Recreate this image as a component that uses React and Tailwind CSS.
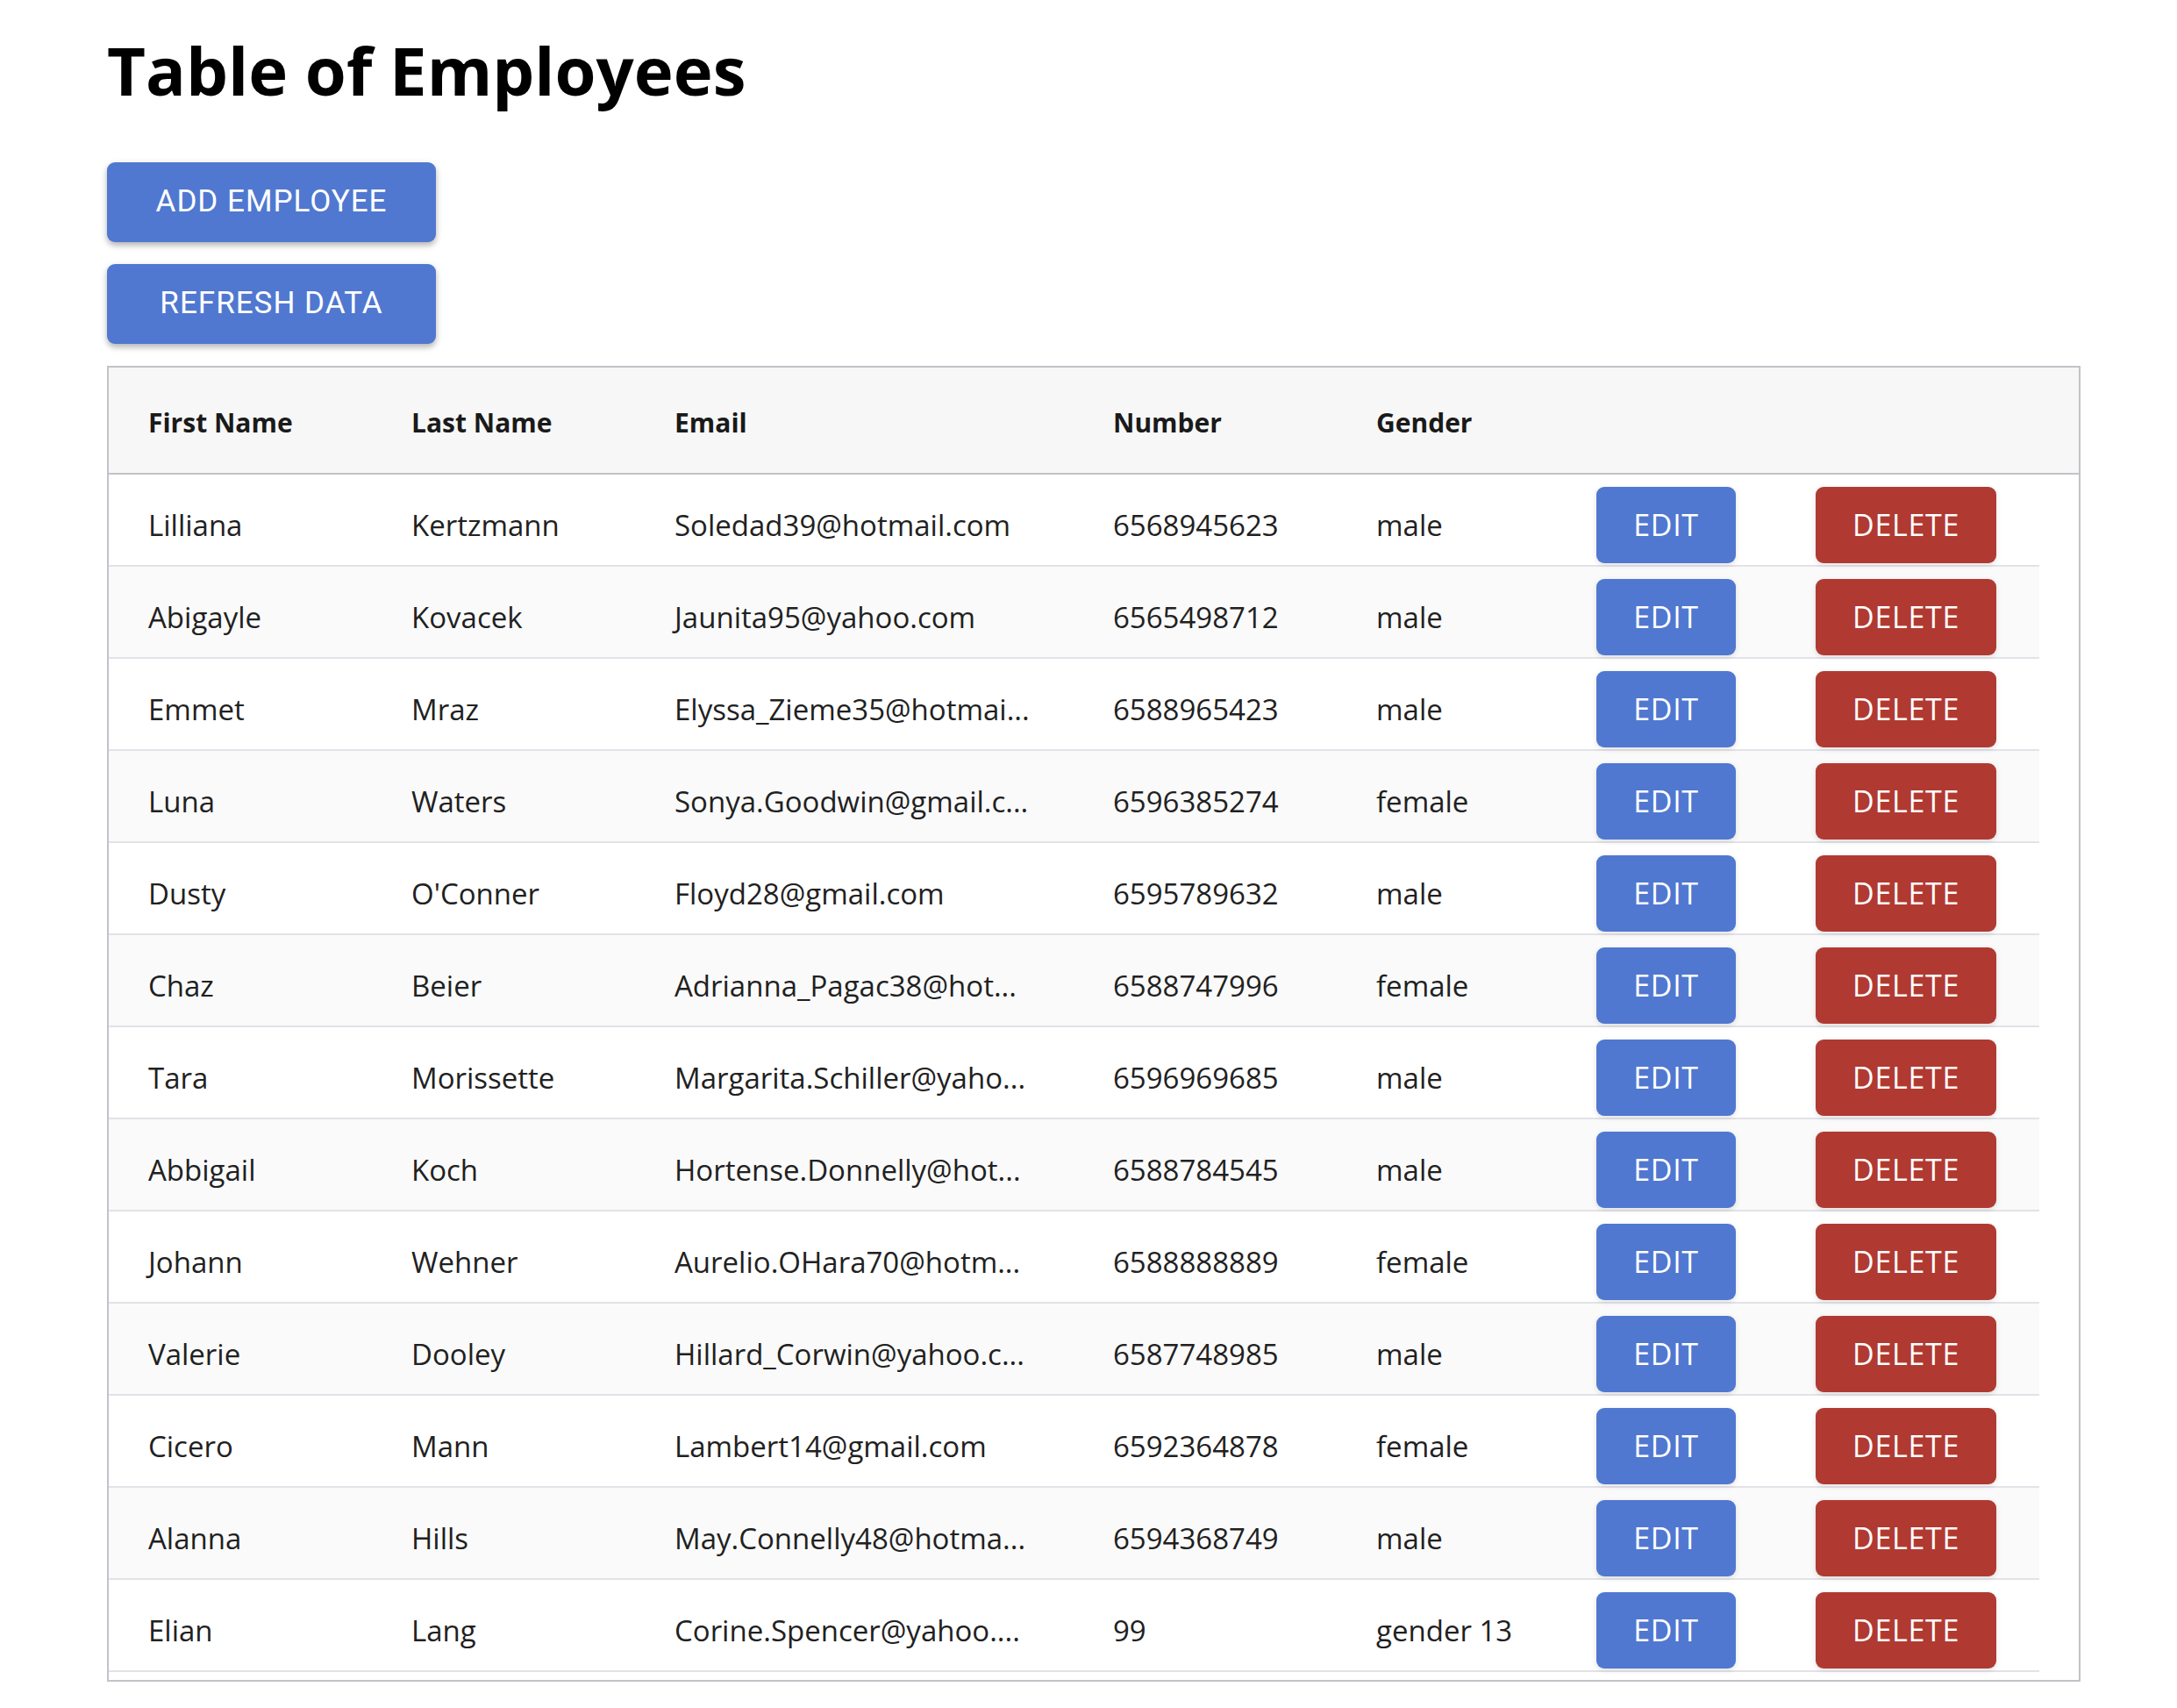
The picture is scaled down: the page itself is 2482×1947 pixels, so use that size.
const employees = [
  ['Lilliana', 'Kertzmann', 'Soledad39@hotmail.com', '6568945623', 'male'],
  ['Abigayle', 'Kovacek', 'Jaunita95@yahoo.com', '6565498712', 'male'],
  ['Emmet', 'Mraz', 'Elyssa_Zieme35@hotmai...', '6588965423', 'male'],
  ['Luna', 'Waters', 'Sonya.Goodwin@gmail.c...', '6596385274', 'female'],
  ['Dusty', "O'Conner", 'Floyd28@gmail.com', '6595789632', 'male'],
  ['Chaz', 'Beier', 'Adrianna_Pagac38@hot...', '6588747996', 'female'],
  ['Tara', 'Morissette', 'Margarita.Schiller@yaho...', '6596969685', 'male'],
  ['Abbigail', 'Koch', 'Hortense.Donnelly@hot...', '6588784545', 'male'],
  ['Johann', 'Wehner', 'Aurelio.OHara70@hotm...', '6588888889', 'female'],
  ['Valerie', 'Dooley', 'Hillard_Corwin@yahoo.c...', '6587748985', 'male'],
  ['Cicero', 'Mann', 'Lambert14@gmail.com', '6592364878', 'female'],
  ['Alanna', 'Hills', 'May.Connelly48@hotma...', '6594368749', 'male'],
  ['Elian', 'Lang', 'Corine.Spencer@yahoo....', '99', 'gender 13'],
];

const cols = 'grid grid-cols-[300px_300px_500px_300px_250px_250px_301px]';

function TopButton({ children }) {
  return (
    <button className="w-[375px] h-[91px] rounded-[9px] bg-[#5078d0] text-white text-[35px] uppercase tracking-[0.02857em] font-['Roboto',sans-serif] shadow-[0_4px_6px_rgba(0,0,0,0.22),0_2px_10px_rgba(0,0,0,0.1)]">
      {children}
    </button>
  );
}

export default function App() {
  return (
    <div className="min-h-screen bg-white pl-[122px] pt-[42px] pb-[29px] font-['Open_Sans',sans-serif] text-[#212121]">
      <h1 className="text-[76px] leading-none font-bold text-black">Table of Employees</h1>

      <div className="mt-[67px] flex flex-col gap-[25px] items-start">
        <TopButton>Add Employee</TopButton>
        <TopButton>Refresh Data</TopButton>
      </div>

      <div className="mt-[25px] w-[2250px] border-2 border-[#c2c2c8] pb-[9px]">
        <div className={`${cols} h-[122px] items-center pt-[5px] bg-[#f7f7f7] border-b-2 border-[#c2c2c8] text-[30px] font-bold text-[#1a1a1a]`}>
          <div className="pl-[45px]">First Name</div>
          <div className="pl-[45px]">Last Name</div>
          <div className="pl-[45px]">Email</div>
          <div className="pl-[45px]">Number</div>
          <div className="pl-[45px]">Gender</div>
          <div />
          <div />
        </div>

        {employees.map((e, i) => (
          <div
            key={i}
            className={`${cols} w-[2201px] h-[105px] items-center pt-[14px] pb-[2px] border-b-2 border-[#e2e2e8] text-[33px] ${i % 2 ? 'bg-[#fafafa]' : 'bg-white'}`}
          >
            <div className="pl-[45px] truncate">{e[0]}</div>
            <div className="pl-[45px] truncate">{e[1]}</div>
            <div className="pl-[45px] pr-[20px] truncate">{e[2]}</div>
            <div className="pl-[45px] truncate">{e[3]}</div>
            <div className="pl-[45px] truncate">{e[4]}</div>
            <div className="pl-[46px]">
              <button className="w-[159px] h-[87px] rounded-[9px] bg-[#5078d0] text-white text-[34px] tracking-[0.02em] shadow-[0_2px_6px_rgba(0,0,0,0.12)]">
                EDIT
              </button>
            </div>
            <div className="pl-[46px]">
              <button className="w-[206px] h-[87px] rounded-[9px] bg-[#b03a32] text-white text-[34px] tracking-[0.02em] shadow-[0_2px_6px_rgba(0,0,0,0.12)]">
                DELETE
              </button>
            </div>
          </div>
        ))}
      </div>
    </div>
  );
}
